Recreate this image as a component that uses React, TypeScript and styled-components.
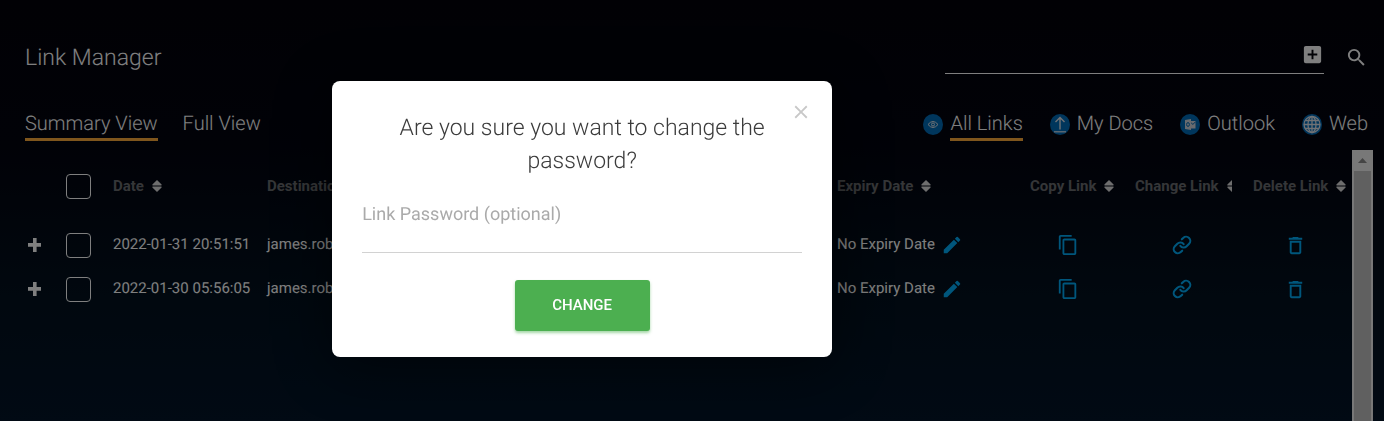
import React from "react";
import styled, { createGlobalStyle } from "styled-components";
import { MdAddBox, MdSearch, MdEdit, MdContentCopy, MdDeleteOutline, MdClose } from "react-icons/md";
import { FiLink } from "react-icons/fi";

const GlobalStyle = createGlobalStyle`
  *, *::before, *::after { box-sizing: border-box; }
  body {
    margin: 0;
    background: #000;
    color: #fff;
    font-family: Roboto, "Liberation Sans", sans-serif;
    text-rendering: geometricPrecision;
  }
  button { font: inherit; color: inherit; background: none; border: 0; padding: 0; cursor: pointer; }
  a { color: inherit; text-decoration: none; }
  svg { display: block; flex: none; }
`;

const Page = styled.div`
  display: flex;
  flex-direction: column;
  height: 100vh;
  padding-left: 25px;
  overflow: hidden;
  background: linear-gradient(180deg, #02030a 0%, #02040f 35%, #02101e 70%, #021428 100%);
`;

const TopBar = styled.header`
  display: flex;
  align-items: flex-end;
  justify-content: space-between;
  padding: 40px 16px 0 0;
`;

const PageTitle = styled.h1`
  margin: 0;
  font-size: 23px;
  line-height: 32px;
  font-weight: 300;
`;

const SearchArea = styled.form`
  display: flex;
  align-items: center;
  gap: 21px;
  height: 34px;
`;

const SearchField = styled.div`
  display: flex;
  align-items: flex-start;
  width: 379px;
  height: 34px;
  padding-top: 3px;
  border-bottom: 1px solid #fff;
`;

const SearchInput = styled.input`
  flex: 1;
  min-width: 0;
  height: 24px;
  border: 0;
  outline: 0;
  background: transparent;
  color: inherit;
  font: inherit;
`;

const ViewBar = styled.div`
  display: flex;
  justify-content: space-between;
  padding: 35px 16px 0 0;
`;

const Tabs = styled.nav<{ $gap: number }>`
  display: flex;
  gap: ${(p) => p.$gap}px;
`;

const Tab = styled.a`
  display: flex;
  align-items: flex-start;
  gap: 7px;
  font-size: 20px;
  line-height: 29px;
  font-weight: 300;
  > svg { margin-top: 5px; }
`;

const TabLabel = styled.span<{ $active?: boolean }>`
  border-bottom: 3px solid ${(p) => (p.$active ? "#ffad3b" : "transparent")};
`;

const ListArea = styled.main`
  display: flex;
  flex: 1;
  min-height: 0;
  margin-top: 9px;
  padding-right: 11px;
`;

const TableWrap = styled.div`
  flex: 1;
  min-width: 0;
  overflow: hidden;
`;

const LinkTable = styled.table`
  width: 100%;
  table-layout: fixed;
  border-collapse: collapse;
  font-size: 15px;
`;

const Col = styled.col<{ $width?: number }>`
  width: ${(p) => (p.$width ? `${p.$width}px` : "auto")};
`;

const HeadCell = styled.th`
  height: 73px;
  padding: 0;
  text-align: left;
  font-size: 15px;
  font-weight: 700;
  color: #6a6d70;
  white-space: nowrap;
`;

const SortButton = styled.button<{ $max?: number }>`
  display: flex;
  align-items: center;
  gap: 8px;
  max-width: ${(p) => (p.$max ? `${p.$max}px` : "none")};
  padding-bottom: 2px;
  overflow: hidden;
  font-weight: 700;
`;

const Cell = styled.td`
  height: 44px;
  padding: 0;
  white-space: nowrap;
  font-weight: 400;
`;

const CellText = styled.span`
  display: block;
  padding-bottom: 2px;
`;

const ExpiryValue = styled.div`
  display: flex;
  align-items: center;
  gap: 6px;
`;

const IconButton = styled.button<{ $indent?: number; $tone?: string }>`
  display: block;
  margin-left: ${(p) => p.$indent ?? 0}px;
  color: ${(p) => p.$tone ?? "#00acf8"};
`;

const CheckBox = styled.input`
  display: block;
  appearance: none;
  width: 25px;
  height: 25px;
  margin: 0;
  border: 1px solid #fff;
  border-radius: 4px;
`;

const ScrollTrack = styled.div`
  width: 21px;
  padding: 0 2px;
  background: #f1f1f1;
`;

const ScrollUp = styled.div`
  display: flex;
  align-items: center;
  justify-content: center;
  height: 21px;
`;

const ScrollThumb = styled.div`
  height: 100%;
  background: #c1c1c1;
`;

const Overlay = styled.div`
  position: fixed;
  inset: 0;
  padding: 81px 24%;
  background: rgba(0, 0, 0, 0.5);
`;

const Dialog = styled.form`
  position: relative;
  display: flex;
  flex-direction: column;
  width: 500px;
  padding: 30px 30px 26px;
  border-radius: 8px;
  background: #fff;
  box-shadow: 0 8px 60px rgba(0, 0, 0, 0.5);
`;

const CloseButton = styled.button`
  position: absolute;
  top: 20px;
  right: 20px;
  color: #c8c8c8;
`;

const DialogTitle = styled.h2`
  margin: 0;
  text-align: center;
  font-size: 23px;
  line-height: 33px;
  font-weight: 300;
  color: #3c3c3c;
`;

const FieldLabel = styled.label`
  margin-top: 24px;
  font-size: 18px;
  line-height: 28px;
  color: #aaa;
`;

const PasswordInput = styled.input`
  height: 24px;
  border: 0;
  border-bottom: 1px solid #d2d2d2;
  outline: 0;
  font: inherit;
`;

const ChangeButton = styled.button`
  align-self: center;
  width: 135px;
  height: 51px;
  margin-top: 27px;
  padding-bottom: 2px;
  border-radius: 3px;
  background: #4caf50;
  color: #fff;
  font-size: 15px;
  font-weight: 500;
  box-shadow: 0 2px 3px rgba(76, 175, 80, 0.5);
`;

const SortIcon = () => (
  <svg width="10" height="12" viewBox="0 0 10 12" fill="#dcdcdc">
    <path d="M5 0 9.600 4.400Q10 5.400 9 5.400H1Q0 5.400 .4 4.400ZM5 12 .4 7.600Q0 6.600 1 6.600H9Q10 6.600 9.600 7.600Z" />
  </svg>
);

const PlusIcon = () => (
  <svg width="13" height="14" viewBox="0 0 13 14" fill="currentColor">
    <path d="M5 0h3.600v5H13v3.800H8.600V14H5V8.800H0V5h5z" />
  </svg>
);

const Badge = ({ children }: { children: React.ReactNode }) => (
  <svg width="20" height="21" viewBox="0 0 20 21" fill="none" stroke="#e0e4ea" strokeWidth="1">
    <ellipse cx="10" cy="10.5" rx="10" ry="10.5" fill="#006cb8" stroke="none" />
    {children}
  </svg>
);

const EyeBadge = () => (
  <Badge>
    <path d="M5 10.500Q10 4.500 15 10.500Q10 16.500 5 10.500Z" />
    <circle cx="10" cy="10.500" r="1.500" />
  </Badge>
);

const UploadBadge = () => (
  <Badge>
    <path d="M10 15.500V3.500M5.500 8 10 3.500 14.500 8" strokeWidth="1.400" />
    <path d="M4 17.800H16" strokeWidth="1.200" />
  </Badge>
);

const OutlookBadge = () => (
  <Badge>
    <path d="M11 7H15.500V14.500H11Z" fill="#d0d6de" stroke="none" />
    <path d="M11 8.500 12.800 10.500 15.500 7.800" stroke="#006cb8" />
    <path d="M5 6 11 5V16L5 15Z" fill="#d0d6de" stroke="none" />
    <ellipse cx="8" cy="10.500" rx="1.400" ry="1.900" stroke="#006cb8" />
  </Badge>
);

const GlobeBadge = () => (
  <Badge>
    <g strokeWidth="1.300">
      <circle cx="10" cy="10.500" r="8" />
      <ellipse cx="10" cy="10.500" rx="4" ry="8" />
      <path d="M10 2.500V18.500M2 10.500H18M3.300 6.500H16.700M3.300 14.500H16.700" />
    </g>
  </Badge>
);

const columns: { label: string; width?: number; max?: number }[] = [
  { label: "Date", width: 154 },
  { label: "Destination" },
  { label: "Expiry Date", width: 193 },
  { label: "Copy Link", width: 105 },
  { label: "Change Link", width: 118, max: 97 },
  { label: "Delete Link", width: 99 },
];

const rows = [
  { date: "2022-01-31 20:51:51", destination: "james.rob", expiry: "No Expiry Date" },
  { date: "2022-01-30 05:56:05", destination: "james.rob", expiry: "No Expiry Date" },
];

const filters = [
  { label: "All Links", icon: <EyeBadge />, active: true },
  { label: "My Docs", icon: <UploadBadge /> },
  { label: "Outlook", icon: <OutlookBadge /> },
  { label: "Web", icon: <GlobeBadge /> },
];

export default function App() {
  return (
    <>
      <GlobalStyle />
      <Page>
        <TopBar>
          <PageTitle>Link Manager</PageTitle>
          <SearchArea>
            <SearchField>
              <SearchInput type="text" aria-label="Search links" />
              <IconButton type="button" $tone="#fff" aria-label="Add">
                <MdAddBox size={23} />
              </IconButton>
            </SearchField>
            <IconButton type="submit" $tone="#fff" aria-label="Search">
              <MdSearch size={23} />
            </IconButton>
          </SearchArea>
        </TopBar>
        <ViewBar>
          <Tabs $gap={25}>
            <Tab href="#summary"><TabLabel $active>Summary View</TabLabel></Tab>
            <Tab href="#full"><TabLabel>Full View</TabLabel></Tab>
          </Tabs>
          <Tabs $gap={27}>
            {filters.map((f) => (
              <Tab href="#links" key={f.label}>
                {f.icon}
                <TabLabel $active={f.active}>{f.label}</TabLabel>
              </Tab>
            ))}
          </Tabs>
        </ViewBar>
        <ListArea>
          <TableWrap>
            <LinkTable>
              <colgroup>
                <Col $width={41} />
                <Col $width={47} />
                {columns.map((c) => <Col key={c.label} $width={c.width} />)}
              </colgroup>
              <thead>
                <tr>
                  <HeadCell />
                  <HeadCell><CheckBox type="checkbox" aria-label="Select all" /></HeadCell>
                  {columns.map((c) => (
                    <HeadCell key={c.label}>
                      <SortButton type="button" $max={c.max}>{c.label}<SortIcon /></SortButton>
                    </HeadCell>
                  ))}
                </tr>
              </thead>
              <tbody>
                {rows.map((r) => (
                  <tr key={r.date}>
                    <Cell>
                      <IconButton type="button" $indent={3} $tone="#fff" aria-label="Expand"><PlusIcon /></IconButton>
                    </Cell>
                    <Cell><CheckBox type="checkbox" aria-label={`Select ${r.date}`} /></Cell>
                    <Cell><CellText>{r.date}</CellText></Cell>
                    <Cell><CellText>{r.destination}</CellText></Cell>
                    <Cell>
                      <ExpiryValue>
                        <CellText>{r.expiry}</CellText>
                        <IconButton type="button" aria-label="Edit expiry date"><MdEdit size={22} /></IconButton>
                      </ExpiryValue>
                    </Cell>
                    <Cell><IconButton type="button" $indent={27} aria-label="Copy link"><MdContentCopy size={22} /></IconButton></Cell>
                    <Cell><IconButton type="button" $indent={37} aria-label="Change link"><FiLink size={20} strokeWidth={2.5} /></IconButton></Cell>
                    <Cell><IconButton type="button" $indent={31} aria-label="Delete link"><MdDeleteOutline size={23} /></IconButton></Cell>
                  </tr>
                ))}
              </tbody>
            </LinkTable>
          </TableWrap>
          <ScrollTrack>
            <ScrollUp>
              <svg width="9" height="5" viewBox="0 0 9 5" fill="#8a8a8a"><path d="M4.500 0 9 5H0z" /></svg>
            </ScrollUp>
            <ScrollThumb />
          </ScrollTrack>
        </ListArea>
      </Page>
      <Overlay>
        <Dialog role="dialog" aria-modal="true" aria-labelledby="dialog-title">
          <CloseButton type="button" aria-label="Close"><MdClose size={22} /></CloseButton>
          <DialogTitle id="dialog-title">Are you sure you want to change the password?</DialogTitle>
          <FieldLabel htmlFor="link-password">Link Password (optional)</FieldLabel>
          <PasswordInput id="link-password" type="password" />
          <ChangeButton type="submit">CHANGE</ChangeButton>
        </Dialog>
      </Overlay>
    </>
  );
}
